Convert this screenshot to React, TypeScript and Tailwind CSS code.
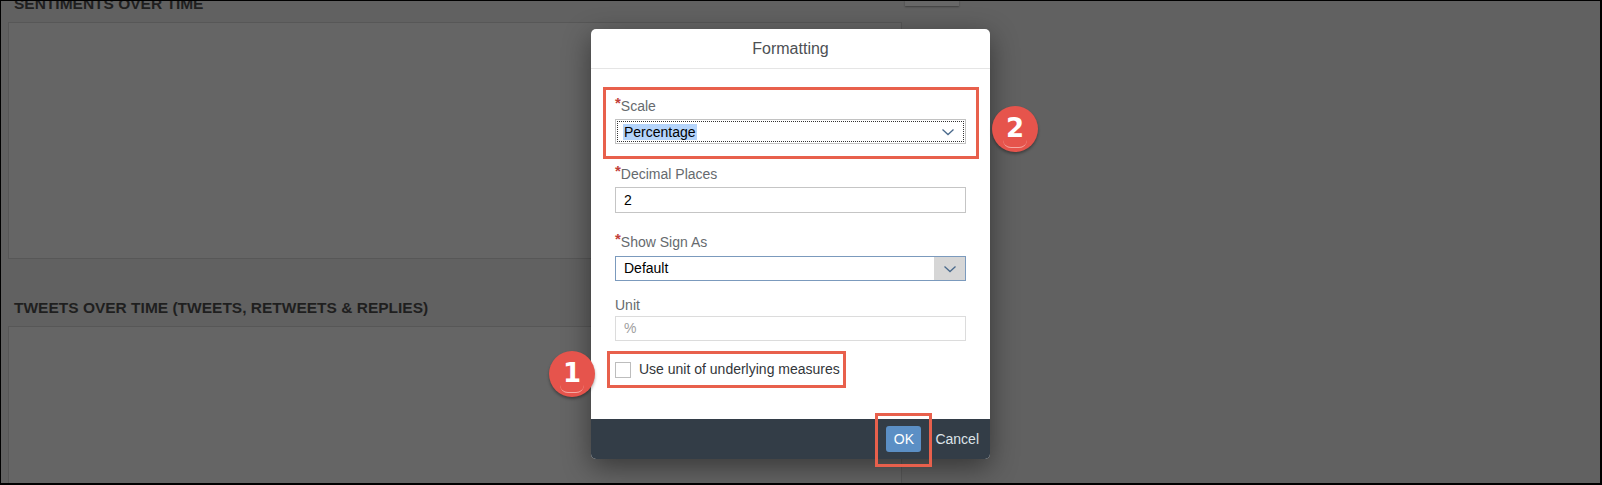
import React from "react";

function Chevron() {
  return (
    <svg width="14" height="8" viewBox="0 0 14 8" fill="none">
      <polyline points="1.5,1.5 7,6.5 12.5,1.5" stroke="#4a6a8c" strokeWidth="1.3" fill="none" />
    </svg>
  );
}

function Badge({ n, className }: { n: string; className: string }) {
  return (
    <div
      className={
        "absolute w-[46px] h-[46px] rounded-full bg-[#e6544c] flex items-center justify-center shadow-[0_2px_3px_rgba(0,0,0,0.35)] " +
        className
      }
    >
      <span className="text-white font-bold text-[26px] leading-none font-['DejaVu_Sans',sans-serif] mt-[-2px]">{n}</span>
      <div className="absolute left-[11px] right-[11px] bottom-[4px] h-[8px] rounded-b-full border-b-[1.5px] border-[#f5aaa4]" />
    </div>
  );
}

function Req({ children }: { children: React.ReactNode }) {
  return (
    <div className="h-[18px] leading-[18px] text-[14px] text-[#666a6e] flex">
      <span className="text-[#c2413a] font-bold text-[15px] leading-[12px]">*</span>
      <span>{children}</span>
    </div>
  );
}

export default function App() {
  return (
    <div className="relative w-[1602px] h-[485px] overflow-hidden bg-[#616161] border-t border-l border-r-2 border-b-2 border-black font-['Liberation_Sans',Arial,sans-serif]">
      {/* background page */}
      <div className="flex pl-[7px]">
        <div className="w-[894px] flex flex-col">
          <div className="mt-[-6px] pl-[6px] text-[15.5px] leading-[18px] font-bold text-[#1f1f1f]">
            SENTIMENTS OVER TIME
          </div>
          <div className="mt-[9px] h-[237px] border border-[#575757] bg-[#656565]" />
          <div className="mt-[40px] pl-[6px] text-[15.5px] leading-[18px] font-bold text-[#1f1f1f]">
            TWEETS OVER TIME (TWEETS, RETWEETS &amp; REPLIES)
          </div>
          <div className="mt-[9px] h-[200px] border border-[#575757] bg-[#656565]" />
        </div>
        <div className="ml-[3px] mt-[-1px] w-[54px] h-[6px] bg-[#676767] shadow-[0_1px_2px_rgba(0,0,0,0.35)]" />
      </div>

      {/* dialog */}
      <div className="absolute left-[590px] top-[28px] w-[399px] h-[430px] bg-white rounded-[5px] flex flex-col shadow-[0_8px_28px_rgba(0,0,0,0.45)]">
        <div className="h-[40px] border-b border-[#e5e5e5] flex items-center justify-center text-[16px] text-[#4d5054]">
          Formatting
        </div>
        <div className="flex-1 px-[24px] flex flex-col">
          <div className="mt-[18px] -ml-[12px] -mr-[13px] border-[3px] border-[#e8604c] pl-[9px] pr-[10px] pt-[7px] pb-[12px]">
            <Req>Scale</Req>
            <div className="relative mt-[4px] h-[25px] border border-[#c2c2c2] flex items-center pl-[7px] pr-[10px]">
              <div className="absolute inset-[1px] border border-dotted border-[#333]" />
              <span className="bg-[#b4d4fb] text-[14px] leading-[16px] text-black px-[1px]">Percentage</span>
              <div className="ml-auto flex items-center">
                <Chevron />
              </div>
            </div>
          </div>

          <div className="mt-[6px]">
            <Req>Decimal Places</Req>
          </div>
          <div className="mt-[4px] h-[26px] border border-[#c5c5c5] flex items-center pl-[8px] text-[14px] text-black">2</div>

          <div className="mt-[20px]">
            <Req>Show Sign As</Req>
          </div>
          <div className="mt-[5px] h-[25px] border border-[#7b9abd] flex items-stretch text-[14px] text-black">
            <div className="flex-1 flex items-center pl-[8px]">Default</div>
            <div className="w-[31px] bg-[#d6d6d6] flex items-center justify-center">
              <Chevron />
            </div>
          </div>

          <div className="mt-[15px] h-[18px] leading-[18px] text-[14px] text-[#666a6e]">Unit</div>
          <div className="mt-[2px] h-[25px] border border-[#dcdcdc] flex items-center pl-[8px] text-[14px] text-[#a0a0a0]">%</div>

          <div className="mt-[10px] -ml-[8px] w-[239px] h-[37px] border-[3px] border-[#e8604c] flex items-center pl-[5px]">
            <div className="w-[16px] h-[16px] border-[1.5px] border-[#bdbdbd] bg-white" />
            <span className="ml-[8px] text-[14px] text-[#32363a]">Use unit of underlying measures</span>
          </div>
        </div>
        <div className="h-[40px] bg-[#333d47] rounded-b-[5px] flex items-center justify-end pr-[11px]">
          <div className="w-[35px] h-[26px] rounded-[3px] bg-[#5b8fc5] flex items-center justify-center text-white text-[14px]">
            OK
          </div>
          <span className="ml-[14px] text-[14px] text-[#dde3e9]">Cancel</span>
        </div>
        <div className="absolute left-[284px] top-[384px] w-[57px] h-[54px] border-[3px] border-[#e8604c]" />
      </div>

      <Badge n="2" className="left-[991px] top-[105px]" />
      <Badge n="1" className="left-[548px] top-[350px]" />
    </div>
  );
}
